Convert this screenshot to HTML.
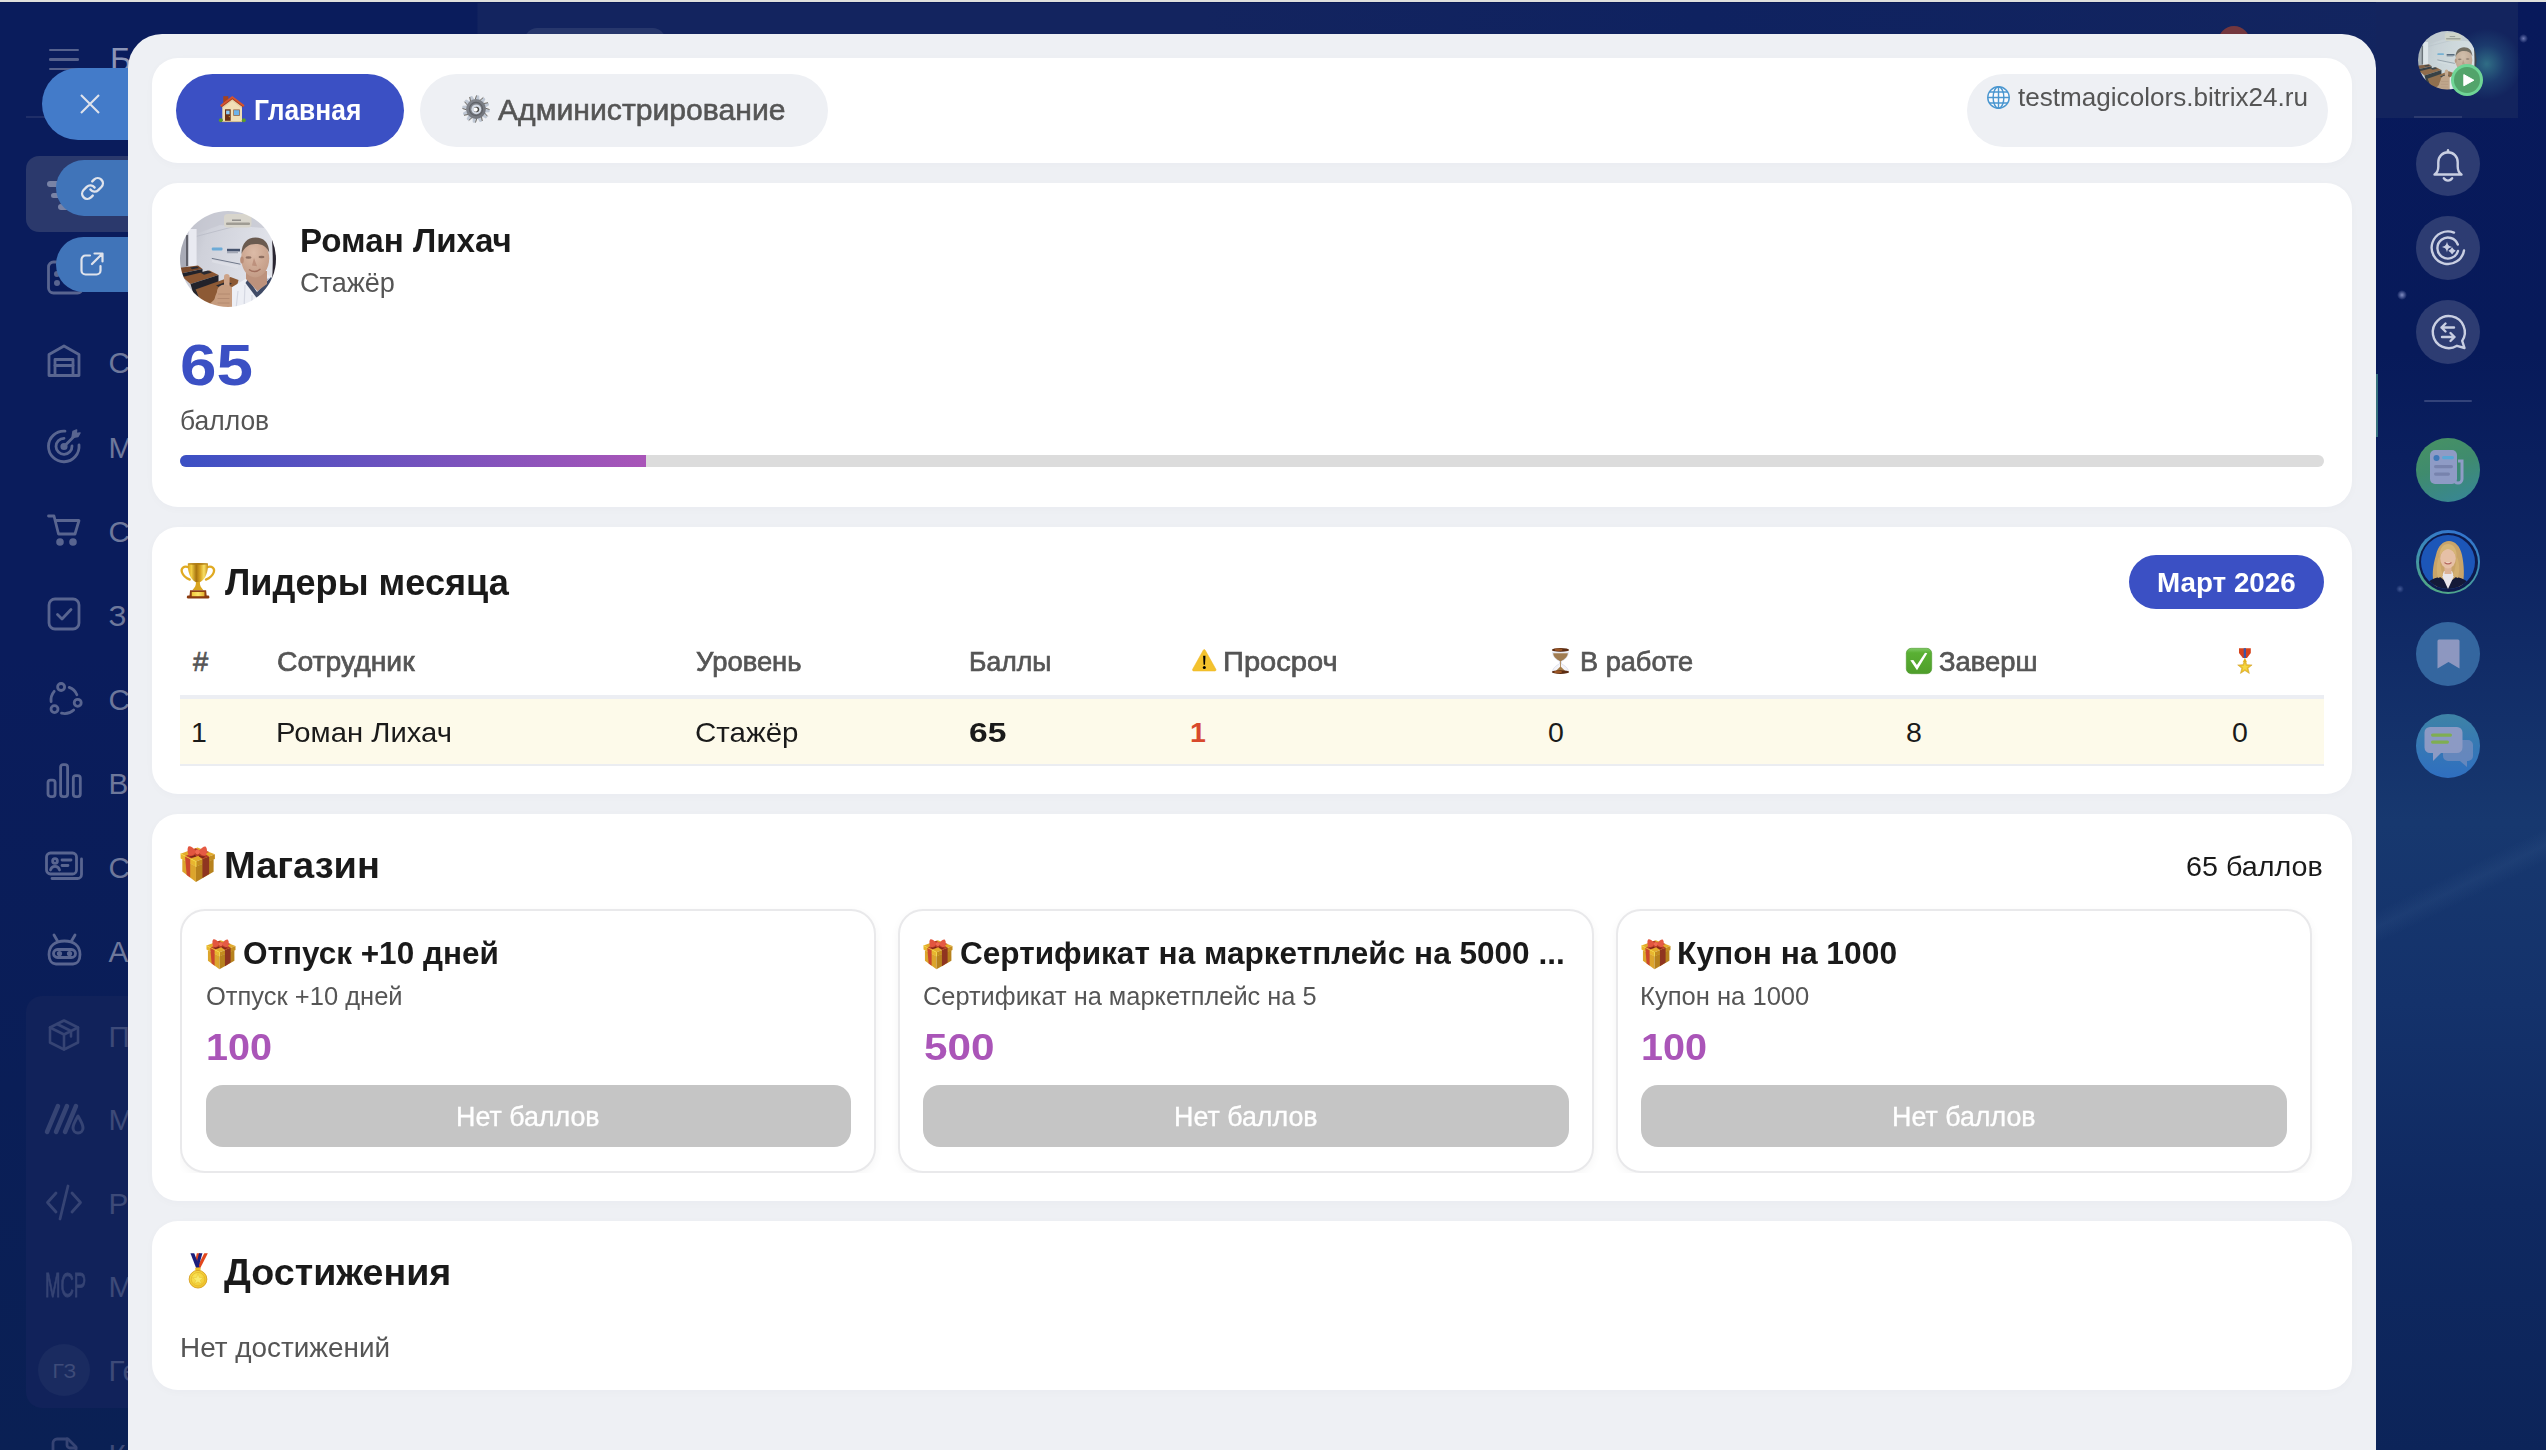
<!DOCTYPE html>
<html lang="ru"><head><meta charset="utf-8"><title>Bitrix24</title>
<style>
*{box-sizing:border-box;margin:0;padding:0}
html,body{width:2546px;height:1450px;overflow:hidden}
body{position:relative;font-family:"Liberation Sans",sans-serif;background:#0a1c5c}
.a{position:absolute}
.t{position:absolute;white-space:nowrap;line-height:1.2;transform-origin:0 50%}
.card{position:absolute;background:#fff;border-radius:26px;box-shadow:0 2px 10px rgba(50,60,100,.025)}
svg{position:absolute;overflow:visible}
</style></head><body>
<div class="a" style="left:0px;top:0px;width:2546px;height:1450px;background:linear-gradient(90deg,#0a1c5c 0,#0a1c5c 477px,#13245f 478px,#13245f 1200px,#0f2260 1700px,#13255f 2546px);border-radius:0px;"></div><div class="a" style="left:0px;top:0px;width:128px;height:1450px;background:linear-gradient(180deg,#0a1c5c 0,#0a1c5c 45%,#0a1e57 75%,#0a2054 100%);border-radius:0px;"></div><div class="a" style="left:0px;top:0px;width:2546px;height:2px;background:#dfe0dd;border-radius:0px;"></div><div class="a" style="left:0px;top:2px;width:2546px;height:1px;background:#0a1a55;border-radius:0px;"></div><div class="a" style="left:525px;top:28px;width:140px;height:30px;background:#27376c;border-radius:12px;"></div><div class="a" style="left:2217.8px;top:25.8px;width:32.4px;height:32.4px;background:#74373e;border-radius:16.2px;"></div><div class="a" style="left:2376px;top:2px;width:170px;height:1448px;background:linear-gradient(180deg,#08195b 0,#071a5a 350px,#0d2462 560px,#17386f 820px,#14326b 1000px,#0f2961 1200px,#0c2459 1450px);border-radius:0px;"></div><div class="a" style="left:2360px;top:862px;width:240px;height:30px;transform:rotate(-26deg);background:linear-gradient(180deg,rgba(120,160,200,0),rgba(120,160,200,.07),rgba(120,160,200,0))"></div><div class="a" style="left:2376px;top:2px;width:142px;height:116px;background:#13245e;border-radius:0px;"></div><div class="a" style="left:2414px;top:116px;width:48px;height:2px;background:#2c3a6e;border-radius:0px;"></div><div class="a" style="left:49px;top:48.8px;width:30px;height:2.6px;background:#55618d;border-radius:1.3px;"></div><div class="a" style="left:49px;top:58.3px;width:30px;height:2.6px;background:#55618d;border-radius:1.3px;"></div><div class="a" style="left:49px;top:67.8px;width:30px;height:2.6px;background:#55618d;border-radius:1.3px;"></div><span id="l_logo" class="t" style="left:110.00px;top:40.07px;font-size:33px;font-weight:400;color:#8b94b6;transform:scaleX(1.0000);">Б</span><div class="a" style="left:26px;top:116px;width:110px;height:2px;background:#1f2e68;border-radius:0px;"></div><div class="a" style="left:26px;top:156px;width:120px;height:76px;background:#2b396c;border-radius:13px;"></div><div class="a" style="left:47px;top:181px;width:30px;height:5.5px;background:#7983a6;border-radius:3px;"></div><div class="a" style="left:51px;top:192.5px;width:30px;height:5.5px;background:#7983a6;border-radius:3px;"></div><div class="a" style="left:58px;top:204px;width:24px;height:5.5px;background:#7983a6;border-radius:3px;"></div><svg style="left:47px;top:260px" width="34" height="34" viewBox="0 0 34 34" fill="none" stroke="#596590" stroke-width="2.8" stroke-linecap="round" stroke-linejoin="round"><rect x="1.500" y="2" width="34" height="31" rx="5"/><circle cx="10" cy="14" r="1.600" fill="#596590"/><circle cx="10" cy="23" r="1.6" fill="#596590"/></svg><svg style="left:47px;top:344px" width="34" height="34" viewBox="0 0 34 34" fill="none" stroke="#596590" stroke-width="2.8" stroke-linecap="round" stroke-linejoin="round"><path d="M2 31.5V10.5L17 2l15 8.5v21z"/><path d="M8 31.5V15.5h18v16"/><path d="M8 21.5h18"/></svg><svg style="left:47px;top:429px" width="34" height="34" viewBox="0 0 34 34" fill="none" stroke="#596590" stroke-width="2.8" stroke-linecap="round" stroke-linejoin="round"><path d="M18 2.2A15.3 15.3 0 1 0 32 16"/><path d="M17 9.3A8 8 0 1 0 25 17"/><circle cx="17" cy="17.5" r="2.2" fill="#596590"/><path d="M17 17.5L29 5.5"/><path d="M26 2.5l-1 6 6 -1 2-3.5-3.8 .5 .4-3.6z" fill="#596590" stroke-width="1.5"/></svg><svg style="left:47px;top:513px" width="34" height="34" viewBox="0 0 34 34" fill="none" stroke="#596590" stroke-width="2.8" stroke-linecap="round" stroke-linejoin="round"><path d="M1.5 3h5.5l4.5 18h16.5l4-13.5H9"/><circle cx="13" cy="29" r="2.4" fill="#596590"/><circle cx="26" cy="29" r="2.4" fill="#596590"/></svg><svg style="left:47px;top:597px" width="34" height="34" viewBox="0 0 34 34" fill="none" stroke="#596590" stroke-width="2.8" stroke-linecap="round" stroke-linejoin="round"><rect x="2" y="2" width="30" height="30" rx="6"/><path d="M10.5 17.5l4.5 4.5 9-9.5"/></svg><svg style="left:47px;top:681px" width="34" height="34" viewBox="0 0 34 34" fill="none" stroke="#596590" stroke-width="2.8" stroke-linecap="round" stroke-linejoin="round"><circle cx="14.1" cy="6.0" r="3.5"/><circle cx="30.7" cy="21.8" r="3.5"/><circle cx="7.5" cy="28.1" r="3.5"/><path d="M22.2 6.4A13.5 13.5 0 0 1 29.9 13.7"/><path d="M26.7 28.9A13.5 13.5 0 0 1 14.5 32.2"/><path d="M4.1 20.7A13.5 13.5 0 0 1 7.2 10.3"/></svg><svg style="left:47px;top:765px" width="34" height="34" viewBox="0 0 34 34" fill="none" stroke="#596590" stroke-width="2.8" stroke-linecap="round" stroke-linejoin="round"><rect x="1" y="15.100" width="7.100" height="16.500" rx="2.500"/><rect x="13.600" y="-0.400" width="7" height="32" rx="2.500"/><rect x="26.300" y="10.600" width="7" height="21" rx="2.500"/></svg><svg style="left:47px;top:849px" width="34" height="34" viewBox="0 0 34 34" fill="none" stroke="#596590" stroke-width="2.8" stroke-linecap="round" stroke-linejoin="round"><rect x="-0.5" y="4" width="30" height="21" rx="4"/><path d="M5 29.5h25.5a4 4 0 0 0 4-4V10"/><circle cx="8" cy="12" r="2.4"/><path d="M3.5 21a4.6 4.6 0 0 1 9 0"/><path d="M15 11h9M15 16.5h6"/></svg><svg style="left:47px;top:933px" width="34" height="34" viewBox="0 0 34 34" fill="none" stroke="#596590" stroke-width="2.8" stroke-linecap="round" stroke-linejoin="round"><path d="M7 2l3.5 6M28 2l-3.500 6"/><path d="M17.500 8C8 8 2 13 2 21.500c0 6 3 9.500 7 9.500h17c4 0 7-3.500 7-9.500C33 13 27 8 17.500 8z"/><rect x="6.500" y="16.500" width="22" height="8" rx="4"/><circle cx="12.500" cy="20.500" r="1.200" fill="#596590"/><circle cx="22.500" cy="20.500" r="1.200" fill="#596590"/></svg><span id="l_b0" class="t" style="left:108.50px;top:344.99px;font-size:29.7px;font-weight:400;color:#6e789b;transform:scaleX(1.0000);">С</span><span id="l_b1" class="t" style="left:108.50px;top:429.99px;font-size:29.7px;font-weight:400;color:#6e789b;transform:scaleX(1.0000);">М</span><span id="l_b2" class="t" style="left:108.50px;top:513.99px;font-size:29.7px;font-weight:400;color:#6e789b;transform:scaleX(1.0000);">С</span><span id="l_b3" class="t" style="left:108.50px;top:597.99px;font-size:29.7px;font-weight:400;color:#6e789b;transform:scaleX(1.0000);">З</span><span id="l_b4" class="t" style="left:108.50px;top:681.99px;font-size:29.7px;font-weight:400;color:#6e789b;transform:scaleX(1.0000);">С</span><span id="l_b5" class="t" style="left:108.50px;top:765.99px;font-size:29.7px;font-weight:400;color:#6e789b;transform:scaleX(1.0000);">В</span><span id="l_b6" class="t" style="left:108.50px;top:849.99px;font-size:29.7px;font-weight:400;color:#6e789b;transform:scaleX(1.0000);">С</span><span id="l_b7" class="t" style="left:108.50px;top:933.99px;font-size:29.7px;font-weight:400;color:#6e789b;transform:scaleX(1.0000);">А</span><div class="a" style="left:26px;top:996px;width:120px;height:412px;background:#11225a;border-radius:16px;"></div><svg style="left:47px;top:1018px" width="34" height="34" viewBox="0 0 34 34" fill="none" stroke="#364474" stroke-width="2.6" stroke-linecap="round" stroke-linejoin="round"><path d="M17 2.500L31 9.500v15L17 31.500 3 24.500v-15z"/><path d="M3 9.500l14 7 14-7M17 16.500v15M10 6l14 7v5.500"/></svg><svg style="left:47px;top:1101px" width="34" height="34" viewBox="0 0 34 34" fill="none" stroke="#364474" stroke-width="4" stroke-linecap="round" stroke-linejoin="round"><path d="M0 31L11 5M9 31L20 5M18 31L29 5" stroke-width="4.5"/><path d="M31 15c-3 5-5 9-5 12a5 5 0 0 0 10 0c0-3-2-7-5-12z" stroke-width="3"/></svg><svg style="left:47px;top:1185px" width="34" height="34" viewBox="0 0 34 34" fill="none" stroke="#364474" stroke-width="2.8" stroke-linecap="round" stroke-linejoin="round"><path d="M9 8L0.500 17.500 9 27M25 8l8.500 9.500L25 27M21 1L13 34"/></svg><span class="t" style="left:44.5px;top:1263.5px;font-size:35px;color:#364474;transform:scaleX(.53);-webkit-text-stroke:.9px #364474;">MCP</span><div class="a" style="left:38px;top:1344px;width:52px;height:52px;background:#1a2b60;border-radius:26px;"></div><span id="l_gz" class="t" style="left:52.50px;top:1358.12px;font-size:21px;font-weight:400;color:#3e4b79;transform:scaleX(1.0000);">ГЗ</span><svg style="left:47px;top:1436.5px" width="34" height="34" viewBox="0 0 34 34" fill="none" stroke="#364474" stroke-width="2.8" stroke-linecap="round" stroke-linejoin="round"><path d="M10 2h11l8 8v22H6V6a4 4 0 0 1 4-4z"/><path d="M20 2v6a3 3 0 0 0 3 3h6"/></svg><span id="l_d0" class="t" style="left:108.50px;top:1018.99px;font-size:29.7px;font-weight:400;color:#3d4a78;transform:scaleX(1.0000);">П</span><span id="l_d1" class="t" style="left:108.50px;top:1101.99px;font-size:29.7px;font-weight:400;color:#3d4a78;transform:scaleX(1.0000);">М</span><span id="l_d2" class="t" style="left:108.50px;top:1185.99px;font-size:29.7px;font-weight:400;color:#3d4a78;transform:scaleX(1.0000);">Р</span><span id="l_d3" class="t" style="left:108.50px;top:1268.99px;font-size:29.7px;font-weight:400;color:#3d4a78;transform:scaleX(1.0000);">М</span><span id="l_d4" class="t" style="left:108.50px;top:1352.99px;font-size:29.7px;font-weight:400;color:#3d4a78;transform:scaleX(1.0000);">Ге</span><span id="l_d5" class="t" style="left:108.50px;top:1436.99px;font-size:29.7px;font-weight:400;color:#3d4a78;transform:scaleX(1.0000);">К</span><div class="a" style="left:42px;top:68px;width:140px;height:72px;background:#437bc9;border-radius:36px;"></div><svg style="left:80px;top:94px" width="20" height="20" viewBox="0 0 20 20" fill="none" stroke="#dfe3ec" stroke-width="2.1" stroke-linecap="butt"><path d="M1 1l18 18M19 1L1 19"/></svg><div class="a" style="left:56px;top:160px;width:120px;height:56px;background:#4074b9;border-radius:28px;"></div><svg style="left:79.5px;top:175.5px" width="25" height="25" viewBox="0 0 24 24" fill="none" stroke="#dfe3ec" stroke-width="2.3" stroke-linecap="round" stroke-linejoin="round"><path d="M10 13a5 5 0 0 0 7.540.540l3-3a5 5 0 0 0-7.070-7.070l-1.720 1.710"/><path d="M14 11a5 5 0 0 0-7.540-.540l-3 3a5 5 0 0 0 7.070 7.070l1.710-1.710"/></svg><div class="a" style="left:56px;top:236.5px;width:120px;height:55.5px;background:#4074b9;border-radius:28px;"></div><svg style="left:80px;top:252px" width="24" height="24" viewBox="0 0 24 24" fill="none" stroke="#dfe3ec" stroke-width="2.2" stroke-linecap="round" stroke-linejoin="round"><path d="M10 3.500H5.500a4 4 0 0 0-4 4V18.500a4 4 0 0 0 4 4H16.500a4 4 0 0 0 4-4V14"/><path d="M12 12L22 2M14.500 1.500H22.500V9.500"/></svg><div class="a" style="left:2452px;top:26px;width:72px;height:76px;background:radial-gradient(ellipse at 48% 50%, rgba(60,140,150,.7) 0, rgba(45,105,140,.32) 35%, rgba(19,36,94,0) 66%);border-radius:36px;"></div><svg style="left:2417.5px;top:30.5px" width="58.5" height="58.5" viewBox="0 0 96 96"><defs><clipPath id="c1"><circle cx="48" cy="48" r="48"/></clipPath></defs><defs><filter id="f2" x="-5%" y="-5%" width="110%" height="110%"><feGaussianBlur stdDeviation="0.75"/></filter><linearGradient id="g3" x1="0" y1="0" x2="1" y2="0.3"><stop offset="0" stop-color="#aeb0bb"/><stop offset=".35" stop-color="#cfd1da"/><stop offset="1" stop-color="#e3e5ec"/></linearGradient><radialGradient id="g4" cx=".45" cy=".35" r=".7"><stop offset="0" stop-color="#dcbba7"/><stop offset="1" stop-color="#c29a84"/></radialGradient></defs><g clip-path="url(#c1)"><g filter="url(#f2)"><rect x="-4" y="-4" width="104" height="104" fill="url(#g3)"/><path d="M-4 -4h104v22L40 14 -4 30z" fill="#c4c6d0" opacity=".7"/><path d="M14 26L60 14" stroke="#b9bbc6" stroke-width=".8"/><rect x="-2" y="22" width="9" height="38" fill="#a9abb6"/><rect x="6" y="24" width="2.200" height="31" fill="#5f6069"/><rect x="8.600" y="18" width="8" height="42" fill="#e9eaf1"/><rect x="44" y="3" width="27.500" height="13.500" rx="3.500" fill="#d8d5cc"/><rect x="46" y="11.500" width="24" height="2.400" rx="1" fill="#9f9c94"/><rect x="52" y="8.500" width="9" height="1.400" fill="#8c8a88"/><rect x="31.800" y="36.600" width="10.700" height="2.900" rx="1" fill="#5aa3d6" opacity=".85"/><rect x="47" y="37.800" width="13" height="2.600" fill="#2c3a58" opacity=".85"/><rect x="47" y="41.200" width="11" height="1" fill="#7c8394" opacity=".7"/><path d="M31.800 47.400L60.400 53.200" stroke="#6f7789" stroke-width="1" fill="none"/><path d="M32 50l26 6" stroke="#dfe1e8" stroke-width="2.500" fill="none" opacity=".7"/><path d="M-2 57l20-2.500 4.500 3.500L1 62.500z" fill="#7a492a"/><path d="M1 62.500l21.500-4.500v4L3 68z" fill="#23232a"/><path d="M10 56.500l7-1 2 1.500-7 1.200z" fill="#2a2a31"/><path d="M2.500 66l27-6.500 9 4.500-28 9z" fill="#8b5631"/><path d="M10.500 73l28-9v12L14 85z" fill="#24242b"/><path d="M20 61.500l8-2 4 2-8 2.200z" fill="#2b2b33"/><path d="M15.500 78.500l35-12.500 8 3-2 8-25 21H23z" fill="#8d5a34"/><path d="M15.500 78.500L24 98h-7L11 83z" fill="#26262c"/><path d="M36 74.500l11-4 5 2.200-11 4.300z" fill="#2a2a31"/><path d="M91.800 26c1 14 1.500 30 0 46l8 4V22z" fill="#2a2530"/><path d="M50 98l.5-21 15-9 22-4.500 10 7V98z" fill="#edeff5"/><path d="M56 98l2-18M64 98l1-24M72 98l0-14" stroke="#d5d8e2" stroke-width="1.200"/><path d="M68 68l9 13 14-15 2.500 3-16 19-12-16z" fill="#3f4b66"/><path d="M70.500 69.500l7 10 11-12" stroke="#aeb6c8" stroke-width="1.200" fill="none"/><path d="M66 60h21v13l-9.500 7L66 68z" fill="#bd927b"/><ellipse cx="75.200" cy="47.500" rx="14" ry="19" fill="url(#g4)"/><path d="M61.500 43c0-11 6-16.500 14-16.500 8 0 13.500 5 13.700 15-2.500-6-7-8.500-13.700-8.500-6.500 0-11 3-14 10z" fill="#6a5a50"/><ellipse cx="68.500" cy="46.500" rx="3" ry="1.300" fill="#7a5c50" opacity=".8"/><ellipse cx="81.500" cy="46" rx="3" ry="1.300" fill="#7a5c50" opacity=".8"/><path d="M69 58.500c3.500 2.500 8 2.500 11.500-.5" stroke="#96604f" stroke-width="1.500" fill="none" opacity=".8"/><path d="M74 47l-2 7.500 5 .8z" fill="#b88a75" opacity=".8"/><ellipse cx="62" cy="49" rx="1.800" ry="3.500" fill="#b98d78"/><rect x="44" y="63" width="5.600" height="16" rx="2.800" fill="#cda388"/><path d="M37 81c0-5 4-8 9-7.500l6 2.500v22H34c-1-6 .5-12 3-17z" fill="#c79d80"/><path d="M38 83h12M37.500 87.500h12M37.500 92h12" stroke="#a97f66" stroke-width=".9" opacity=".7"/><path d="M24 98l11-10 4 10z" fill="#c59b7d"/></g></g><circle cx="48" cy="48" r="48" fill="#9fd0c0" opacity=".18"/></svg><div class="a" style="left:2451.2px;top:64.2px;width:31.6px;height:31.6px;background:#6fd596;border-radius:16px;"></div><div class="a" style="left:2454px;top:67px;width:26px;height:26px;background:#52a46b;border-radius:13px;"></div><svg style="left:2462.500px;top:73.800px" width="11.500" height="12.400" viewBox="0 0 11.500 12.400"><path d="M.8.600L10.900 6.200.8 11.800z" fill="#fff" stroke="#fff" stroke-width="1" stroke-linejoin="round"/></svg><div class="a" style="left:2397px;top:290px;width:10px;height:10px;background:radial-gradient(circle, rgba(160,170,220,.8) 0, rgba(160,170,220,0) 70%);border-radius:5px;"></div><div class="a" style="left:2396px;top:585px;width:8px;height:8px;background:radial-gradient(circle, rgba(120,140,200,.5) 0, rgba(120,140,200,0) 70%);border-radius:4px;"></div><div class="a" style="left:2519px;top:34px;width:9px;height:9px;background:radial-gradient(circle, rgba(150,160,215,.7) 0, rgba(150,160,215,0) 70%);border-radius:4px;"></div><div class="a" style="left:2416px;top:132px;width:64px;height:64px;background:#2d3c72;border-radius:32px;"></div><svg style="left:2432px;top:148px" width="32" height="34" viewBox="0 0 32 34" fill="none" stroke="#c9cfe2" stroke-width="2.400" stroke-linecap="round" stroke-linejoin="round"><path d="M16 2.200v2"/><path d="M2.500 26.500c2.800-1.800 3.800-4 3.800-8v-4.300C6.300 8.500 10.500 4.200 16 4.200s9.700 4.300 9.700 10v4.300c0 4 1 6.200 3.800 8z"/><path d="M11.800 30.200c1 1.700 2.500 2.400 4.200 2.400s3.200-.7 4.200-2.400"/></svg><div class="a" style="left:2416px;top:216px;width:64px;height:64px;background:#2d3c72;border-radius:32px;"></div><svg style="left:2430px;top:230px" width="36" height="36" viewBox="0 0 36 36" fill="none" stroke="#c9cfe2" stroke-width="2.400" stroke-linecap="round"><path d="M24 2.600A16.300 16.300 0 1 0 34 20.500"/><path d="M27.800 14.500A10.500 10.500 0 1 0 28 21"/><path d="M17 11.500c.7 3.700 1.800 4.800 5.500 5.500-3.700.7-4.800 1.800-5.500 5.500-.7-3.700-1.800-4.800-5.500-5.500 3.700-.7 4.800-1.800 5.500-5.500z" fill="#c9cfe2" stroke="none"/><path d="M23 19.500l1.600 2.200 2.200 1.600-2.200 1.600L23 27.100l-1.600-2.200-2.200-1.600 2.200-1.600z" fill="#c9cfe2" stroke="none" transform="translate(0 -1.500) scale(.96)"/></svg><div class="a" style="left:2416px;top:300px;width:64px;height:64px;background:#2d3c72;border-radius:32px;"></div><svg style="left:2430px;top:314px" width="36" height="36" viewBox="0 0 36 36" fill="none" stroke="#c9cfe2" stroke-width="2.400" stroke-linecap="round" stroke-linejoin="round"><path d="M34.500 34l-2.300-7.200A16 16 0 1 0 27 31.800z"/><path d="M24 13.500H11.500M15.500 9.500l-4 4 4 4"/><path d="M12 23h12.500M20.500 19l4 4-4 4"/></svg><div class="a" style="left:2424px;top:400px;width:48px;height:2px;background:#33437a;border-radius:1px;"></div><div class="a" style="left:2416px;top:438px;width:64px;height:64px;background:linear-gradient(160deg,#489263 0,#3f8b6e 45%,#37869a 100%);border-radius:32px;"></div><svg style="left:2428px;top:449px" width="40" height="40" viewBox="0 0 40 40"><path d="M30 12h4v18a4 4 0 0 1-8 0" fill="none" stroke="#8f9cc6" stroke-width="3"/><rect x="2" y="1" width="27" height="34" rx="5" fill="#8e9bc5"/><circle cx="8.500" cy="9" r="3" fill="#3e78b8"/><rect x="14" y="7" width="12" height="3.200" rx="1.600" fill="#59a7d6"/><rect x="6" y="16" width="19" height="3.200" rx="1.600" fill="#7783ad"/><rect x="6" y="23.500" width="16" height="3.200" rx="1.600" fill="#7783ad"/></svg><div class="a" style="left:2416px;top:530px;width:64px;height:64px;background:linear-gradient(200deg,#2f6ed6 0,#3e8fb0 50%,#57b07a 100%);border-radius:32px;"></div><div class="a" style="left:2418.5px;top:532.5px;width:59px;height:59px;background:#0d1a4d;border-radius:30px;"></div><svg style="left:2421px;top:535px" width="54" height="54" viewBox="0 0 54 54"><defs><clipPath id="c5"><circle cx="27" cy="27" r="27"/></clipPath></defs><g clip-path="url(#c5)"><rect width="54" height="54" fill="#1c56b8"/><path d="M14 52c-4-10-2-22 1-32 2-9 7-14 13-14s11 5 13 14c2 10 3 22 0 32z" fill="#c9a469"/><path d="M4 54c1-8 8-11 15-12l8 6 8-6c7 1 14 4 15 12z" fill="#141a38"/><path d="M21 41l6 13 6-13-2-5h-8z" fill="#e9e6ea"/><rect x="23.500" y="30" width="7" height="9" fill="#dcb296"/><ellipse cx="27" cy="23.500" rx="7.800" ry="10" fill="#e6c0a6"/><path d="M18.500 22c0-9 3.500-13 8.500-13s9 4 8.500 13c-2-5-5-7.500-8.500-8-3.500.5-6.500 3-8.500 8z" fill="#d6b577"/><path d="M18.500 21c-3 6-3.500 14-1.500 22l5-2c-2-6-3-12-3.500-20zM35.500 21c3 6 3.500 14 1.500 22l-5-2c2-6 3-12 3.500-20z" fill="#d4b070"/><path d="M23.500 27.500c2 1.600 5 1.600 7 0" stroke="#b2655a" stroke-width="1.200" fill="#f4e6e0"/></g></svg><div class="a" style="left:2416px;top:622px;width:64px;height:64px;background:#34669f;border-radius:32px;"></div><svg style="left:2437px;top:639px" width="23" height="30" viewBox="0 0 23 30"><path d="M.5 2a1.500 1.500 0 0 1 1.500-1.500h19a1.500 1.500 0 0 1 1.500 1.500v27.500L11.500 23 .5 29.500z" fill="#8d97c0"/></svg><div class="a" style="left:2416px;top:714px;width:64px;height:64px;background:linear-gradient(180deg,#3e83a6 0,#3577b6 55%,#2f6fc0 100%);border-radius:32px;"></div><svg style="left:2424px;top:726px" width="50" height="42" viewBox="0 0 50 42"><path d="M22 14h22a5 5 0 0 1 5 5v11a5 5 0 0 1-5 5h-1l0 6-7-6H24a5 5 0 0 1-5-5V19a5 5 0 0 1 3-5z" fill="#6f8bbd" opacity=".85"/><path d="M6 1h27a5.500 5.500 0 0 1 5.500 5.500v15A5.500 5.500 0 0 1 33 27H17l-8 8v-8H6A5.500 5.500 0 0 1 .5 21.500v-15A5.500 5.500 0 0 1 6 1z" fill="#8c9ac4"/><rect x="7" y="7.500" width="21" height="3.200" rx="1.600" fill="#7fae52"/><rect x="7" y="14.500" width="18" height="3.200" rx="1.600" fill="#7fae52"/></svg><div class="a" style="left:128px;top:34px;width:2248px;height:1430px;background:#eef0f4;border-radius:0px;border-radius:34px 34px 0 0;"></div><div class="a" style="left:2375.5px;top:374px;width:2.5px;height:63px;background:#35707d;border-radius:0px;"></div><div class="card" style="left:152px;top:58px;width:2200px;height:104.5px"></div><div class="a" style="left:176px;top:74px;width:227.5px;height:72.5px;background:#3b50c4;border-radius:37px;"></div><svg style="left:218.5px;top:95.5px" width="26" height="26.4" viewBox="0 0 26 26.4"><rect x="4.3" y="0.2" width="5" height="8" fill="#a5421f"/><path d="M13.300 2.800L23 10.200V26H3.300V10.200z" fill="#f1dfb6"/><path d="M3.300 10.500l10-7.700 9.700 7.700v2l-9.700-7.400-10 7.400z" fill="#d9c49a" opacity=".6"/><path d="M13.300 0L25.600 9.300 24 11.300 13.300 3.200 2.600 11.300 1 9.300z" fill="#d5532f"/><path d="M13.300 3.200L24 11.300l.5-.6L13.300 2.300 2.100 10.700l.5.600z" fill="#7a2a12" opacity=".55"/><rect x="6" y="13.300" width="5.700" height="11.500" fill="#6a3115"/><rect x="7.100" y="14.600" width="3.500" height="3.700" fill="#8ecdf6"/><circle cx="10.300" cy="20.600" r=".6" fill="#e0a030"/><rect x="14.300" y="13.500" width="6.500" height="6.300" fill="#8a5b3c"/><rect x="15" y="14.200" width="5.100" height="4.900" fill="#6db3ea"/><circle cx="1.900" cy="24.300" r="2" fill="#5c9a2b"/><circle cx="24.800" cy="24.300" r="2" fill="#5c9a2b"/><rect x="3.300" y="25.200" width="19.700" height=".9" fill="#c9b48a"/></svg><span id="n_home" class="t" style="left:254.20px;top:92.09px;font-size:29.7px;font-weight:700;color:#fff;transform:scaleX(0.8891);">Главная</span><div class="a" style="left:420px;top:74px;width:408px;height:72.5px;background:#eef0f4;border-radius:37px;"></div><svg style="left:461.5px;top:94.5px" width="28" height="28" viewBox="0 0 28 28"><defs><linearGradient id="g6" x1="0" y1="0" x2="1" y2="1"><stop offset="0" stop-color="#84888f"/><stop offset="1" stop-color="#6f7279"/></linearGradient></defs><g transform="rotate(8 14 14)"><path d="M11.7 5.5L12.65 0.5Q14 -0.40000000000000036 15.35 0.5L16.3 5.5z" fill="#c0c8d4"/><path d="M11.7 5.5L12.65 0.5" stroke="#5f5a52" stroke-width=".8" fill="none"/></g><g transform="rotate(38 14 14)"><path d="M11.7 5.5L12.65 0.5Q14 -0.40000000000000036 15.35 0.5L16.3 5.5z" fill="#c0c8d4"/><path d="M11.7 5.5L12.65 0.5" stroke="#5f5a52" stroke-width=".8" fill="none"/></g><g transform="rotate(68 14 14)"><path d="M11.7 5.5L12.65 0.5Q14 -0.40000000000000036 15.35 0.5L16.3 5.5z" fill="#c0c8d4"/><path d="M11.7 5.5L12.65 0.5" stroke="#5f5a52" stroke-width=".8" fill="none"/></g><g transform="rotate(98 14 14)"><path d="M11.7 5.5L12.65 0.5Q14 -0.40000000000000036 15.35 0.5L16.3 5.5z" fill="#c0c8d4"/><path d="M11.7 5.5L12.65 0.5" stroke="#5f5a52" stroke-width=".8" fill="none"/></g><g transform="rotate(128 14 14)"><path d="M11.7 5.5L12.65 0.5Q14 -0.40000000000000036 15.35 0.5L16.3 5.5z" fill="#c0c8d4"/><path d="M11.7 5.5L12.65 0.5" stroke="#5f5a52" stroke-width=".8" fill="none"/></g><g transform="rotate(158 14 14)"><path d="M11.7 5.5L12.65 0.5Q14 -0.40000000000000036 15.35 0.5L16.3 5.5z" fill="#c0c8d4"/><path d="M11.7 5.5L12.65 0.5" stroke="#5f5a52" stroke-width=".8" fill="none"/></g><g transform="rotate(188 14 14)"><path d="M11.7 5.5L12.65 0.5Q14 -0.40000000000000036 15.35 0.5L16.3 5.5z" fill="#c0c8d4"/><path d="M11.7 5.5L12.65 0.5" stroke="#5f5a52" stroke-width=".8" fill="none"/></g><g transform="rotate(218 14 14)"><path d="M11.7 5.5L12.65 0.5Q14 -0.40000000000000036 15.35 0.5L16.3 5.5z" fill="#c0c8d4"/><path d="M11.7 5.5L12.65 0.5" stroke="#5f5a52" stroke-width=".8" fill="none"/></g><g transform="rotate(248 14 14)"><path d="M11.7 5.5L12.65 0.5Q14 -0.40000000000000036 15.35 0.5L16.3 5.5z" fill="#c0c8d4"/><path d="M11.7 5.5L12.65 0.5" stroke="#5f5a52" stroke-width=".8" fill="none"/></g><g transform="rotate(278 14 14)"><path d="M11.7 5.5L12.65 0.5Q14 -0.40000000000000036 15.35 0.5L16.3 5.5z" fill="#c0c8d4"/><path d="M11.7 5.5L12.65 0.5" stroke="#5f5a52" stroke-width=".8" fill="none"/></g><g transform="rotate(308 14 14)"><path d="M11.7 5.5L12.65 0.5Q14 -0.40000000000000036 15.35 0.5L16.3 5.5z" fill="#c0c8d4"/><path d="M11.7 5.5L12.65 0.5" stroke="#5f5a52" stroke-width=".8" fill="none"/></g><g transform="rotate(338 14 14)"><path d="M11.7 5.5L12.65 0.5Q14 -0.40000000000000036 15.35 0.5L16.3 5.5z" fill="#c0c8d4"/><path d="M11.7 5.5L12.65 0.5" stroke="#5f5a52" stroke-width=".8" fill="none"/></g><circle cx="14" cy="14" r="9.900" fill="url(#g6)"/><circle cx="14" cy="14" r="6.600" fill="none" stroke="#5f6268" stroke-width="1.100"/><circle cx="14.3" cy="14.3" r="4.900" fill="#d3d9e3"/><circle cx="14.5" cy="14.5" r="2.700" fill="#4a4a48"/><circle cx="13.6" cy="14.6" r="2.100" fill="#fff"/></svg><span id="n_admin" class="t" style="left:498.00px;top:92.09px;font-size:29.7px;font-weight:400;color:#555555;transform:scaleX(1.0159);-webkit-text-stroke:.6px #555;">Администрирование</span><div class="a" style="left:1967px;top:74px;width:361px;height:72.5px;background:#eef0f4;border-radius:37px;"></div><svg style="left:1987px;top:85.5px" width="23" height="23" viewBox="0 0 24 24"><circle cx="12" cy="12" r="11.200" fill="#fbfbfd" stroke="#4b97d0" stroke-width="1.500"/><ellipse cx="12" cy="12" rx="5.600" ry="11.200" fill="none" stroke="#4b97d0" stroke-width="1.500"/><path d="M12 .8v22.400M.8 12h22.400M2.600 6.200h18.800M2.600 17.800h18.800" fill="none" stroke="#4b97d0" stroke-width="1.500"/></svg><span id="n_url" class="t" style="left:2018.00px;top:81.95px;font-size:25.2px;font-weight:400;color:#555555;transform:scaleX(1.0358);">testmagicolors.bitrix24.ru</span><div class="card" style="left:152px;top:182.5px;width:2200px;height:324.500px"></div><svg style="left:180px;top:211px" width="96" height="96" viewBox="0 0 96 96"><defs><clipPath id="c7"><circle cx="48" cy="48" r="48"/></clipPath></defs><defs><filter id="f8" x="-5%" y="-5%" width="110%" height="110%"><feGaussianBlur stdDeviation="0.75"/></filter><linearGradient id="g9" x1="0" y1="0" x2="1" y2="0.3"><stop offset="0" stop-color="#aeb0bb"/><stop offset=".35" stop-color="#cfd1da"/><stop offset="1" stop-color="#e3e5ec"/></linearGradient><radialGradient id="g10" cx=".45" cy=".35" r=".7"><stop offset="0" stop-color="#dcbba7"/><stop offset="1" stop-color="#c29a84"/></radialGradient></defs><g clip-path="url(#c7)"><g filter="url(#f8)"><rect x="-4" y="-4" width="104" height="104" fill="url(#g9)"/><path d="M-4 -4h104v22L40 14 -4 30z" fill="#c4c6d0" opacity=".7"/><path d="M14 26L60 14" stroke="#b9bbc6" stroke-width=".8"/><rect x="-2" y="22" width="9" height="38" fill="#a9abb6"/><rect x="6" y="24" width="2.200" height="31" fill="#5f6069"/><rect x="8.600" y="18" width="8" height="42" fill="#e9eaf1"/><rect x="44" y="3" width="27.500" height="13.500" rx="3.500" fill="#d8d5cc"/><rect x="46" y="11.500" width="24" height="2.400" rx="1" fill="#9f9c94"/><rect x="52" y="8.500" width="9" height="1.400" fill="#8c8a88"/><rect x="31.800" y="36.600" width="10.700" height="2.900" rx="1" fill="#5aa3d6" opacity=".85"/><rect x="47" y="37.800" width="13" height="2.600" fill="#2c3a58" opacity=".85"/><rect x="47" y="41.200" width="11" height="1" fill="#7c8394" opacity=".7"/><path d="M31.800 47.400L60.400 53.200" stroke="#6f7789" stroke-width="1" fill="none"/><path d="M32 50l26 6" stroke="#dfe1e8" stroke-width="2.500" fill="none" opacity=".7"/><path d="M-2 57l20-2.500 4.500 3.500L1 62.500z" fill="#7a492a"/><path d="M1 62.500l21.500-4.500v4L3 68z" fill="#23232a"/><path d="M10 56.500l7-1 2 1.500-7 1.200z" fill="#2a2a31"/><path d="M2.500 66l27-6.500 9 4.500-28 9z" fill="#8b5631"/><path d="M10.500 73l28-9v12L14 85z" fill="#24242b"/><path d="M20 61.500l8-2 4 2-8 2.200z" fill="#2b2b33"/><path d="M15.500 78.500l35-12.500 8 3-2 8-25 21H23z" fill="#8d5a34"/><path d="M15.500 78.500L24 98h-7L11 83z" fill="#26262c"/><path d="M36 74.500l11-4 5 2.200-11 4.300z" fill="#2a2a31"/><path d="M91.800 26c1 14 1.500 30 0 46l8 4V22z" fill="#2a2530"/><path d="M50 98l.5-21 15-9 22-4.500 10 7V98z" fill="#edeff5"/><path d="M56 98l2-18M64 98l1-24M72 98l0-14" stroke="#d5d8e2" stroke-width="1.200"/><path d="M68 68l9 13 14-15 2.500 3-16 19-12-16z" fill="#3f4b66"/><path d="M70.500 69.500l7 10 11-12" stroke="#aeb6c8" stroke-width="1.200" fill="none"/><path d="M66 60h21v13l-9.500 7L66 68z" fill="#bd927b"/><ellipse cx="75.200" cy="47.500" rx="14" ry="19" fill="url(#g10)"/><path d="M61.500 43c0-11 6-16.500 14-16.500 8 0 13.500 5 13.700 15-2.500-6-7-8.500-13.700-8.500-6.500 0-11 3-14 10z" fill="#6a5a50"/><ellipse cx="68.500" cy="46.500" rx="3" ry="1.300" fill="#7a5c50" opacity=".8"/><ellipse cx="81.500" cy="46" rx="3" ry="1.300" fill="#7a5c50" opacity=".8"/><path d="M69 58.500c3.500 2.500 8 2.500 11.500-.5" stroke="#96604f" stroke-width="1.500" fill="none" opacity=".8"/><path d="M74 47l-2 7.500 5 .8z" fill="#b88a75" opacity=".8"/><ellipse cx="62" cy="49" rx="1.800" ry="3.500" fill="#b98d78"/><rect x="44" y="63" width="5.600" height="16" rx="2.800" fill="#cda388"/><path d="M37 81c0-5 4-8 9-7.500l6 2.500v22H34c-1-6 .5-12 3-17z" fill="#c79d80"/><path d="M38 83h12M37.500 87.500h12M37.500 92h12" stroke="#a97f66" stroke-width=".9" opacity=".7"/><path d="M24 98l11-10 4 10z" fill="#c59b7d"/></g></g></svg><span id="p_name" class="t" style="left:299.80px;top:220.57px;font-size:33.1px;font-weight:700;color:#1a1a1a;transform:scaleX(1.0024);">Роман Лихач</span><span id="p_role" class="t" style="left:300.20px;top:265.77px;font-size:27.5px;font-weight:400;color:#555555;transform:scaleX(0.9842);">Стажёр</span><span id="p_pts" class="t" style="left:180.00px;top:330.10px;font-size:58px;font-weight:700;color:#3b50c4;transform:scaleX(1.1311);">65</span><span id="p_lbl" class="t" style="left:180.20px;top:403.87px;font-size:27.5px;font-weight:400;color:#555555;transform:scaleX(0.9616);">баллов</span><div class="a" style="left:180px;top:455px;width:2144px;height:12px;background:#dcdcdc;border-radius:6px;"></div><div class="a" style="left:180px;top:455px;width:466px;height:12px;background:linear-gradient(90deg,#3b50c4,#a955b8);border-radius:0px;border-radius:6px 0 0 6px;"></div><div class="card" style="left:152px;top:526.500px;width:2200px;height:267.500px"></div><svg style="left:181.3px;top:562.7px" width="33.71142857142858" height="35.470285714285716" viewBox="0 0 34.500 36.300"><defs><linearGradient id="g11" x1="0" y1="0" x2="1" y2="0"><stop offset="0" stop-color="#d9a21c"/><stop offset=".18" stop-color="#f2cf45"/><stop offset=".42" stop-color="#a8740f"/><stop offset=".62" stop-color="#d8a422"/><stop offset=".8" stop-color="#f9e065"/><stop offset="1" stop-color="#c78f18"/></linearGradient><linearGradient id="g12" x1="0" y1="0" x2="1" y2="0"><stop offset="0" stop-color="#f1c73a"/><stop offset=".5" stop-color="#fbe56a"/><stop offset="1" stop-color="#e4b02c"/></linearGradient></defs><path d="M7.500 4.200C3 2.500-.5 5.500 1 9.500c1.200 3.300 4.500 6 8 7.500" fill="none" stroke="#e0aa22" stroke-width="2.300" stroke-linecap="round"/><path d="M27 4.200c4.500-1.700 8 1.300 6.500 5.300-1.200 3.300-4.500 6-8 7.500" fill="none" stroke="#e0aa22" stroke-width="2.300" stroke-linecap="round"/><path d="M7 .5h20.600c.3 8.500-2.300 16-8.300 19.300h-4c-6-3.300-8.600-10.800-8.300-19.300z" fill="url(#g11)"/><ellipse cx="17.300" cy="1" rx="10.300" ry=".9" fill="#b07c12"/><path d="M15.300 19.500h4c-.2 3 .8 5.500 3.700 8.300H11.600c2.900-2.800 3.900-5.300 3.700-8.300z" fill="#d9a520"/><path d="M9.300 28h16.400l.6 5.700H8.700z" fill="#8e3f12"/><rect x="6" y="33.300" width="23" height="3" rx="1.300" fill="#8a3a0e"/><rect x="11" y="29.700" width="13" height="4.300" fill="url(#g12)"/></svg><span id="h_lead" class="t" style="left:225.00px;top:559.50px;font-size:37.4px;font-weight:700;color:#1a1a1a;transform:scaleX(0.9662);">Лидеры месяца</span><div class="a" style="left:2129px;top:555px;width:195px;height:54px;background:#3b50c4;border-radius:27px;"></div><span id="h_month" class="t" style="left:2157.00px;top:565.98px;font-size:27.7px;font-weight:700;color:#fff;transform:scaleX(1.0037);">Март 2026</span><span id="th0" class="t" style="left:193.00px;top:645.97px;font-size:27.4px;font-weight:400;color:#555555;transform:scaleX(1.0000);-webkit-text-stroke:.7px #555;">#</span><span id="th1" class="t" style="left:276.80px;top:645.97px;font-size:27.4px;font-weight:400;color:#555555;transform:scaleX(1.0339);-webkit-text-stroke:.7px #555;">Сотрудник</span><span id="th2" class="t" style="left:696.40px;top:645.97px;font-size:27.4px;font-weight:400;color:#555555;transform:scaleX(1.0001);-webkit-text-stroke:.7px #555;">Уровень</span><span id="th3" class="t" style="left:969.20px;top:645.97px;font-size:27.4px;font-weight:400;color:#555555;transform:scaleX(0.9696);-webkit-text-stroke:.7px #555;">Баллы</span><svg style="left:1190.5px;top:648.6px" width="26.5" height="22.714285714285715" viewBox="0 0 28.200 24"><path d="M13.050 1.200a1.200 1.200 0 0 1 2.100 0l11.300 20.300a1.200 1.200 0 0 1-1.050 1.800H2.800a1.200 1.200 0 0 1-1.050-1.800z" fill="#f3c22d" stroke="#f0b828" stroke-width=".6"/><path d="M12.900 7h2.500l-.5 9.700h-1.500z" fill="#000"/><circle cx="14.150" cy="19.600" r="1.600" fill="#000"/></svg><span id="th4" class="t" style="left:1223.00px;top:645.97px;font-size:27.4px;font-weight:400;color:#555555;transform:scaleX(1.0615);-webkit-text-stroke:.7px #555;">Просроч</span><svg style="left:1549.5px;top:648px" width="21" height="26" viewBox="0 0 20 26.400"><ellipse cx="10" cy="2" rx="8.800" ry="2" fill="#5b2c12"/><ellipse cx="8" cy="1.800" rx="4" ry="1.200" fill="#9a5525"/><path d="M2 4h16c0 5-3.500 7.500-7 9.500v2.500c3.500 2 7 4.500 7 8H2c0-3.500 3.500-6 7-8v-2.500C5.500 11.500 2 9 2 4z" fill="#f4f4f8" stroke="#c8cbe0" stroke-width=".5"/><path d="M2.500 5.400h15C17 9.500 14 11.500 10.800 13.300h-1.600C6 11.500 3 9.500 2.500 5.400z" fill="#a07c52"/><path d="M9.600 13h.8v6l4.600 4.500H5L9.600 19z" fill="#a47a45"/><ellipse cx="10" cy="24.400" rx="8.800" ry="1.900" fill="#5b2c12"/><ellipse cx="7.500" cy="24.400" rx="4" ry="1.200" fill="#9a5525"/></svg><span id="th5" class="t" style="left:1580.00px;top:645.97px;font-size:27.4px;font-weight:400;color:#555555;transform:scaleX(0.9912);-webkit-text-stroke:.7px #555;">В работе</span><svg style="left:1906px;top:648px" width="26" height="26" viewBox="0 0 26 26"><defs><linearGradient id="g13" x1="0" y1="0" x2="0" y2="1"><stop offset="0" stop-color="#7fca66"/><stop offset=".18" stop-color="#59b033"/><stop offset="1" stop-color="#4f9e2b"/></linearGradient></defs><rect x=".3" y=".3" width="25.400" height="25.400" rx="5" fill="url(#g13)" stroke="#4a9628" stroke-width=".6"/><path d="M4.300 12.300L11 22.300 21.300 5.200l-2.300-.4L10.900 17 7.300 12z" fill="#fff"/></svg><span id="th6" class="t" style="left:1939.00px;top:645.97px;font-size:27.4px;font-weight:400;color:#555555;transform:scaleX(1.0001);-webkit-text-stroke:.7px #555;">Заверш</span><svg style="left:2236.5px;top:648px" width="15.8" height="26" viewBox="0 0 15.800 26.400"><path d="M1.900 .2h12v5L10 10.200H5.800L1.900 5.200z" fill="#d6431d"/><rect x="6.700" y=".2" width="2.300" height="10" fill="#3b56a8"/><path d="M7.900 10l2.200 4.500H5.600z" fill="#f0c52e"/><polygon points="7.90,11.90 9.84,16.93 15.22,17.22 11.04,20.62 12.43,25.83 7.90,22.90 3.37,25.83 4.76,20.62 0.58,17.22 5.96,16.93" fill="#ecc12c" stroke="#c9971c" stroke-width=".5"/><polygon points="7.90,15.60 8.90,18.22 11.70,18.36 9.52,20.13 10.25,22.84 7.90,21.30 5.55,22.84 6.28,20.13 4.10,18.36 6.90,18.22" fill="#f8e14e" opacity=".7"/></svg><div class="a" style="left:180px;top:694.7px;width:2144px;height:4px;background:#eceef3;border-radius:0px;"></div><div class="a" style="left:180px;top:698.7px;width:2144px;height:65.5px;background:#fdfaea;border-radius:0px;"></div><div class="a" style="left:180px;top:764px;width:2144px;height:2px;background:#ebedf1;border-radius:0px;"></div><span id="td0" class="t" style="left:191.00px;top:714.92px;font-size:28.5px;font-weight:400;color:#1a1a1a;transform:scaleX(1.0000);">1</span><span id="td1" class="t" style="left:276.40px;top:714.92px;font-size:28.5px;font-weight:400;color:#1a1a1a;transform:scaleX(1.0268);">Роман Лихач</span><span id="td2" class="t" style="left:695.40px;top:714.92px;font-size:28.5px;font-weight:400;color:#1a1a1a;transform:scaleX(1.0355);">Стажёр</span><span id="td3" class="t" style="left:969.20px;top:714.92px;font-size:28.5px;font-weight:700;color:#1a1a1a;transform:scaleX(1.1783);">65</span><span id="td4" class="t" style="left:1190.00px;top:714.92px;font-size:28.5px;font-weight:700;color:#d8492c;transform:scaleX(1.0000);">1</span><span id="td5" class="t" style="left:1548.00px;top:714.92px;font-size:28.5px;font-weight:400;color:#1a1a1a;transform:scaleX(1.0000);">0</span><span id="td6" class="t" style="left:1906.00px;top:714.92px;font-size:28.5px;font-weight:400;color:#1a1a1a;transform:scaleX(1.0000);">8</span><span id="td7" class="t" style="left:2232.00px;top:714.92px;font-size:28.5px;font-weight:400;color:#1a1a1a;transform:scaleX(1.0000);">0</span><div class="card" style="left:152px;top:813.500px;width:2200px;height:387.500px"></div><svg style="left:180px;top:845.5px" width="35.5" height="35.89887640449438" viewBox="0 0 35.600 36"><path d="M.6 7.800L17.500 1.600 35 8.200 16 15.600z" fill="#e2ab2c"/><path d="M.6 7.800L16 15.600v5.200L.6 12.600z" fill="#e8b62f"/><path d="M16 15.600L35 8.200v4.900L16 20.800z" fill="#c48d1f"/><path d="M2.300 13.400L16 20.500V36L2.300 25.700z" fill="#dca52c"/><path d="M16 20.500l17.700-7.300v12.600L16 36z" fill="#b7821d"/><path d="M5 10.100l5.200 2.600V31.700L6.700 29z" fill="#cb472d"/><path d="M22.500 13.100l6.700-2.600v17.500l-6.700 4.200z" fill="#8f3520"/><path d="M5 10.100L22.500 3.500 29.200 6 10.200 12.700z" fill="#c2402a"/><path d="M10.500 4.200L15.800 2.200 29.200 10.500 22.500 13.100z" fill="#b63a25"/><path d="M16 15.600v5.200" stroke="#f7e04a" stroke-width=".9"/><path d="M.6 7.800L16 15.600" stroke="#f5dc3c" stroke-width=".8"/><path d="M16.500 5.700C13 1 9.500-.5 8.500.6 7 2.400 7.500 7.500 9 9.700c2.500.4 6-1.400 7.500-4z" fill="#e2553f"/><path d="M18.500 5.700c3.500-4.700 6.500-5.900 7.500-4.800 1.500 1.800 1.500 6.300-.500 8.800-2.500.3-5.500-1.400-7-4z" fill="#e55a44"/><ellipse cx="17.500" cy="6" rx="2.300" ry="2.500" fill="#ef6a52"/><path d="M9 9.700c2 1 4.500.7 6-.8l1.300 1.600-5.300 1.300z" fill="#5a1a10" opacity=".75"/><path d="M19.500 9c1.500 1.300 4 1.700 6 .7l-2.200 2.600-4.300-1.600z" fill="#5a1a10" opacity=".6"/></svg><span id="h_shop" class="t" style="left:224.00px;top:842.60px;font-size:37.4px;font-weight:700;color:#1a1a1a;transform:scaleX(1.0168);">Магазин</span><span id="h_bal" class="t" style="left:2186.20px;top:848.77px;font-size:28.5px;font-weight:400;color:#1a1a1a;transform:scaleX(1.0075);">65 баллов</span><div class="a" style="left:180.3px;top:909px;width:696px;height:264px;background:#fff;border:2px solid #e9e9eb;border-radius:25px;box-shadow:0 3px 10px rgba(0,0,0,.045)"></div><svg style="left:206.0px;top:939px" width="30" height="30.337078651685392" viewBox="0 0 35.600 36"><path d="M.6 7.800L17.500 1.600 35 8.200 16 15.600z" fill="#e2ab2c"/><path d="M.6 7.800L16 15.600v5.200L.6 12.600z" fill="#e8b62f"/><path d="M16 15.600L35 8.200v4.900L16 20.800z" fill="#c48d1f"/><path d="M2.300 13.400L16 20.500V36L2.300 25.700z" fill="#dca52c"/><path d="M16 20.500l17.700-7.300v12.600L16 36z" fill="#b7821d"/><path d="M5 10.100l5.200 2.600V31.700L6.700 29z" fill="#cb472d"/><path d="M22.500 13.100l6.700-2.600v17.500l-6.700 4.200z" fill="#8f3520"/><path d="M5 10.100L22.500 3.500 29.200 6 10.200 12.700z" fill="#c2402a"/><path d="M10.500 4.200L15.800 2.200 29.200 10.500 22.500 13.100z" fill="#b63a25"/><path d="M16 15.600v5.200" stroke="#f7e04a" stroke-width=".9"/><path d="M.6 7.800L16 15.600" stroke="#f5dc3c" stroke-width=".8"/><path d="M16.500 5.700C13 1 9.500-.5 8.500.6 7 2.400 7.500 7.500 9 9.700c2.500.4 6-1.400 7.500-4z" fill="#e2553f"/><path d="M18.500 5.700c3.500-4.700 6.500-5.900 7.500-4.800 1.500 1.800 1.500 6.300-.500 8.800-2.500.3-5.500-1.400-7-4z" fill="#e55a44"/><ellipse cx="17.500" cy="6" rx="2.300" ry="2.500" fill="#ef6a52"/><path d="M9 9.700c2 1 4.500.7 6-.8l1.300 1.600-5.300 1.300z" fill="#5a1a10" opacity=".75"/><path d="M19.500 9c1.500 1.300 4 1.700 6 .7l-2.200 2.600-4.300-1.600z" fill="#5a1a10" opacity=".6"/></svg><span id="i_t0" class="t" style="left:242.80px;top:935.07px;font-size:31.2px;font-weight:700;color:#1a1a1a;transform:scaleX(1.0100);">Отпуск +10 дней</span><span id="i_d0" class="t" style="left:205.80px;top:980.95px;font-size:25.2px;font-weight:400;color:#555555;transform:scaleX(1.0130);">Отпуск +10 дней</span><span id="i_p0" class="t" style="left:205.80px;top:1025.32px;font-size:37.7px;font-weight:700;color:#aa55b8;transform:scaleX(1.0502);">100</span><div class="a" style="left:205.8px;top:1085px;width:645.5px;height:62px;background:#c5c5c5;border-radius:17px;"></div><span id="i_b0" class="t" style="left:456.20px;top:1099.98px;font-size:27.6px;font-weight:400;color:#fff;transform:scaleX(0.9724);-webkit-text-stroke:.35px #fff;">Нет баллов</span><div class="a" style="left:897.7px;top:909px;width:696px;height:264px;background:#fff;border:2px solid #e9e9eb;border-radius:25px;box-shadow:0 3px 10px rgba(0,0,0,.045)"></div><svg style="left:923.4000000000001px;top:939px" width="30" height="30.337078651685392" viewBox="0 0 35.600 36"><path d="M.6 7.800L17.500 1.600 35 8.200 16 15.600z" fill="#e2ab2c"/><path d="M.6 7.800L16 15.600v5.200L.6 12.600z" fill="#e8b62f"/><path d="M16 15.600L35 8.200v4.900L16 20.800z" fill="#c48d1f"/><path d="M2.300 13.400L16 20.500V36L2.300 25.700z" fill="#dca52c"/><path d="M16 20.500l17.700-7.300v12.600L16 36z" fill="#b7821d"/><path d="M5 10.100l5.200 2.600V31.700L6.700 29z" fill="#cb472d"/><path d="M22.500 13.100l6.700-2.600v17.500l-6.700 4.200z" fill="#8f3520"/><path d="M5 10.100L22.500 3.500 29.200 6 10.200 12.700z" fill="#c2402a"/><path d="M10.500 4.200L15.800 2.200 29.200 10.500 22.500 13.100z" fill="#b63a25"/><path d="M16 15.600v5.200" stroke="#f7e04a" stroke-width=".9"/><path d="M.6 7.800L16 15.600" stroke="#f5dc3c" stroke-width=".8"/><path d="M16.500 5.700C13 1 9.500-.5 8.500.6 7 2.400 7.500 7.500 9 9.700c2.500.4 6-1.400 7.500-4z" fill="#e2553f"/><path d="M18.500 5.700c3.500-4.700 6.500-5.900 7.500-4.800 1.500 1.800 1.500 6.300-.500 8.800-2.500.3-5.500-1.400-7-4z" fill="#e55a44"/><ellipse cx="17.500" cy="6" rx="2.300" ry="2.500" fill="#ef6a52"/><path d="M9 9.700c2 1 4.500.7 6-.8l1.300 1.600-5.300 1.300z" fill="#5a1a10" opacity=".75"/><path d="M19.500 9c1.500 1.300 4 1.700 6 .7l-2.200 2.600-4.300-1.600z" fill="#5a1a10" opacity=".6"/></svg><span id="i_t1" class="t" style="left:960.20px;top:935.07px;font-size:31.2px;font-weight:700;color:#1a1a1a;transform:scaleX(1.0118);">Сертификат на маркетплейс на 5000 ...</span><span id="i_d1" class="t" style="left:923.20px;top:980.95px;font-size:25.2px;font-weight:400;color:#555555;transform:scaleX(1.0072);">Сертификат на маркетплейс на 5</span><span id="i_p1" class="t" style="left:924.20px;top:1025.32px;font-size:37.7px;font-weight:700;color:#aa55b8;transform:scaleX(1.1198);">500</span><div class="a" style="left:923.2px;top:1085px;width:645.5px;height:62px;background:#c5c5c5;border-radius:17px;"></div><span id="i_b1" class="t" style="left:1173.60px;top:1099.98px;font-size:27.6px;font-weight:400;color:#fff;transform:scaleX(0.9724);-webkit-text-stroke:.35px #fff;">Нет баллов</span><div class="a" style="left:1615.7px;top:909px;width:696px;height:264px;background:#fff;border:2px solid #e9e9eb;border-radius:25px;box-shadow:0 3px 10px rgba(0,0,0,.045)"></div><svg style="left:1641.4px;top:939px" width="30" height="30.337078651685392" viewBox="0 0 35.600 36"><path d="M.6 7.800L17.500 1.600 35 8.200 16 15.600z" fill="#e2ab2c"/><path d="M.6 7.800L16 15.600v5.200L.6 12.600z" fill="#e8b62f"/><path d="M16 15.600L35 8.200v4.900L16 20.800z" fill="#c48d1f"/><path d="M2.300 13.400L16 20.500V36L2.300 25.700z" fill="#dca52c"/><path d="M16 20.500l17.700-7.300v12.600L16 36z" fill="#b7821d"/><path d="M5 10.100l5.200 2.600V31.700L6.700 29z" fill="#cb472d"/><path d="M22.500 13.100l6.700-2.600v17.500l-6.700 4.200z" fill="#8f3520"/><path d="M5 10.100L22.500 3.500 29.200 6 10.200 12.700z" fill="#c2402a"/><path d="M10.500 4.200L15.800 2.200 29.200 10.500 22.500 13.100z" fill="#b63a25"/><path d="M16 15.600v5.200" stroke="#f7e04a" stroke-width=".9"/><path d="M.6 7.800L16 15.600" stroke="#f5dc3c" stroke-width=".8"/><path d="M16.500 5.700C13 1 9.500-.5 8.500.6 7 2.400 7.500 7.500 9 9.700c2.500.4 6-1.400 7.500-4z" fill="#e2553f"/><path d="M18.500 5.700c3.500-4.700 6.500-5.900 7.500-4.800 1.500 1.800 1.500 6.300-.500 8.800-2.500.3-5.500-1.400-7-4z" fill="#e55a44"/><ellipse cx="17.500" cy="6" rx="2.300" ry="2.500" fill="#ef6a52"/><path d="M9 9.700c2 1 4.500.7 6-.8l1.300 1.600-5.300 1.300z" fill="#5a1a10" opacity=".75"/><path d="M19.500 9c1.500 1.300 4 1.700 6 .7l-2.200 2.600-4.300-1.600z" fill="#5a1a10" opacity=".6"/></svg><span id="i_t2" class="t" style="left:1677.20px;top:935.07px;font-size:31.2px;font-weight:700;color:#1a1a1a;transform:scaleX(1.0188);">Купон на 1000</span><span id="i_d2" class="t" style="left:1640.20px;top:980.95px;font-size:25.2px;font-weight:400;color:#555555;transform:scaleX(1.0152);">Купон на 1000</span><span id="i_p2" class="t" style="left:1641.20px;top:1025.32px;font-size:37.7px;font-weight:700;color:#aa55b8;transform:scaleX(1.0502);">100</span><div class="a" style="left:1641.2px;top:1085px;width:645.5px;height:62px;background:#c5c5c5;border-radius:17px;"></div><span id="i_b2" class="t" style="left:1891.60px;top:1099.98px;font-size:27.6px;font-weight:400;color:#fff;transform:scaleX(0.9724);-webkit-text-stroke:.35px #fff;">Нет баллов</span><div class="a" style="left:160px;top:1173px;width:2170px;height:10px;background:#fff;border-radius:0px;"></div><div class="a" style="left:160px;top:905px;width:20px;height:270px;background:#fff;border-radius:0px;"></div><div class="card" style="left:152px;top:1220.500px;width:2200px;height:169px"></div><svg style="left:186px;top:1252.5px" width="24" height="35.5" viewBox="0 0 24.400 36"><defs><radialGradient id="g14" cx=".4" cy=".4" r=".7"><stop offset="0" stop-color="#fbe95a"/><stop offset="1" stop-color="#eebf24"/></radialGradient></defs><path d="M11 .2h3.600l-3.300 9.500-2-1.500z" fill="#e2461c"/><path d="M18.600 .2h3.600L14.300 15.800 11 15z" fill="#e2461c"/><path d="M4.500 .2h3.900l5.400 14.200-3.300 1.400z" fill="#1d1f7c"/><path d="M13.200 .2h3.500L12.700 14.500 10 13.500z" fill="#1d1f7c"/><rect x="9.500" y="14.600" width="5.300" height="3.500" rx=".8" fill="#eec02a"/><circle cx="12.200" cy="26.600" r="9" fill="url(#g14)" stroke="#d79e1e" stroke-width=".9"/><circle cx="12.200" cy="26.600" r="6.900" fill="none" stroke="#e0ae25" stroke-width=".6"/><polygon points="12.20,20.90 13.67,24.78 17.81,24.98 14.58,27.57 15.67,31.57 12.20,29.30 8.73,31.57 9.82,27.57 6.59,24.98 10.73,24.78" fill="#f9ea6a" stroke="#e3b52a" stroke-width=".4"/></svg><span id="h_ach" class="t" style="left:224.00px;top:1249.60px;font-size:37.4px;font-weight:700;color:#1a1a1a;transform:scaleX(1.0067);">Достижения</span><span id="a_none" class="t" style="left:179.50px;top:1330.58px;font-size:27.7px;font-weight:400;color:#555555;transform:scaleX(1.0073);">Нет достижений</span>
</body></html>
